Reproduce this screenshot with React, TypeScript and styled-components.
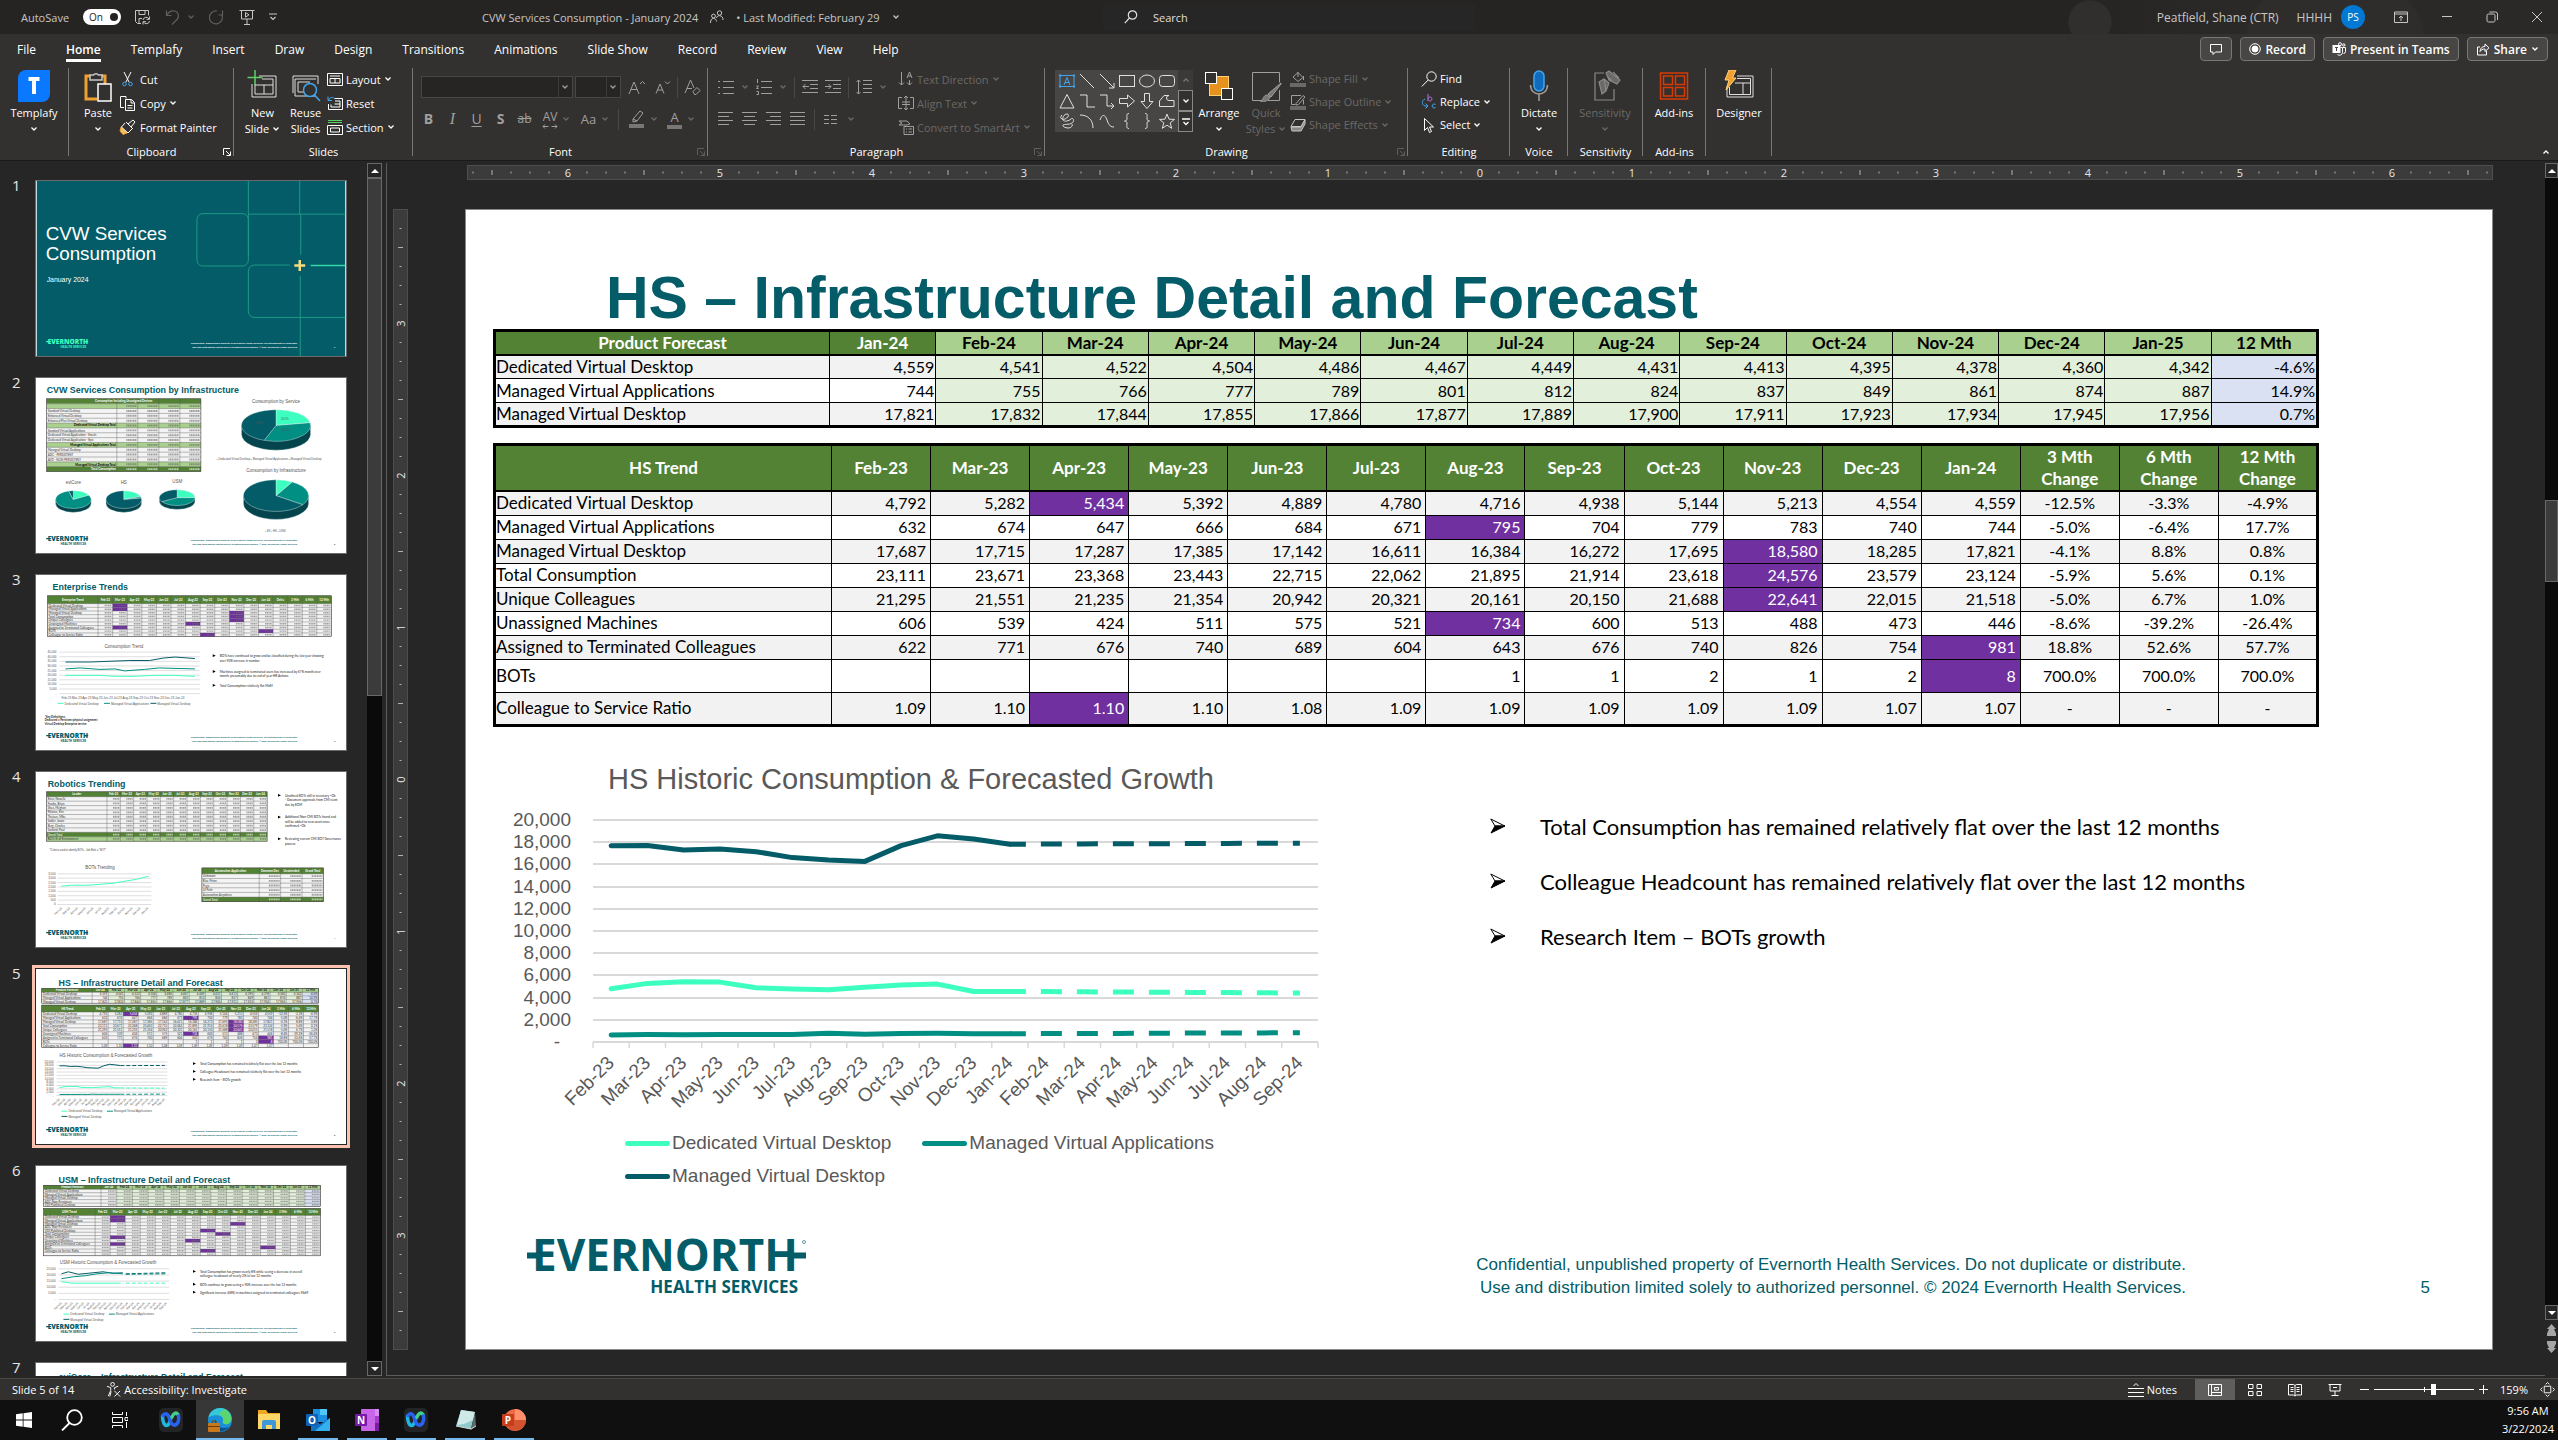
import React from "react";
import styled, { createGlobalStyle, css } from "styled-components";

const UI = `"Open Sans", "Noto Sans", sans-serif`;
const ARIAL = `"Liberation Sans", Arial, sans-serif`;
const SHEET = `Lato, "Open Sans", sans-serif`;

const TEAL = "#035c67";
const SEA = "#008f82";
const MINT = "#3dffc0";

const Global = createGlobalStyle`
  *, *::before, *::after { box-sizing: border-box; }
  body { margin: 0; background: #262626; font-family: ${UI}; overflow: hidden; }
  button, input, select { font: inherit; color: inherit; }
  button { background: none; border: 0; padding: 0; margin: 0; }
  ul, ol { list-style: none; margin: 0; padding: 0; }
  h1, h2, p, figure { margin: 0; }
  svg { display: block; flex: none; }
`;

const Page = styled.div`
  height: 100vh;
  display: flex;
  flex-direction: column;
  color: #fff;
  font-size: 11px;
`;

/* ------------------------------------------------------------ icons */

type SvgProps = { s?: number; w?: number; h?: number; vb?: string; children: React.ReactNode; c?: string; sw?: number };
const Ico = ({ s = 16, w, h, vb = "0 0 16 16", children, c = "currentColor", sw = 1 }: SvgProps) => (
  <svg width={w ?? s} height={h ?? s} viewBox={vb} fill="none" stroke={c} strokeWidth={sw} aria-hidden="true">
    {children}
  </svg>
);

const Chev = ({ up }: { up?: boolean }) => (
  <Ico w={8} h={6} vb="0 0 8 6" sw={1.3}>
    <path d={up ? "M1.5 4.5L4 2L6.5 4.5" : "M1.5 1.5L4 4L6.5 1.5"} />
  </Ico>
);

const Launcher = () => (
  <Ico s={8} vb="0 0 8 8">
    <path d="M.5 7V.5H7M3 3l4 4M7.5 3.5v4h-4" />
  </Ico>
);

/* ------------------------------------------------------------ title bar */

const TitleBar = styled.header`
  height: 34px;
  flex: none;
  display: grid;
  grid-template-columns: 482fr 621fr 372fr 1083fr;
  align-items: center;
  background: #252423;
  color: #c8c6c4;
`;
const QuickAccess = styled.div`
  display: flex;
  align-items: center;
  gap: 14px;
  padding-left: 21px;
`;
const AutoSave = styled.label`
  display: flex;
  align-items: center;
  gap: 7px;
`;
const Hidden = styled.input`
  appearance: none;
  width: 0;
  height: 0;
  margin: 0;
`;
const Pill = styled.span`
  display: flex;
  align-items: center;
  justify-content: space-between;
  width: 38px;
  height: 16px;
  padding: 0 3px 0 6px;
  border-radius: 8px;
  background: #fff;
  color: #252423;
  font-size: 10px;
  &::after {
    content: "";
    width: 8px;
    height: 8px;
    border-radius: 50%;
    background: #252423;
  }
`;
const IconButton = styled.button<{ $dim?: boolean }>`
  display: flex;
  align-items: center;
  gap: 6px;
  color: ${(p) => (p.$dim ? "#605e5c" : "inherit")};
`;
const DocTitle = styled.div`
  display: flex;
  align-items: center;
  gap: 12px;
  white-space: nowrap;
`;
const SearchBox = styled.label`
  display: flex;
  align-items: center;
  gap: 15px;
  height: 25px;
  padding-left: 21px;
  background: #262626;
  color: #e1dfdd;
`;
const SearchInput = styled.input`
  flex: 1;
  min-width: 0;
  border: 0;
  background: none;
  padding: 0;
  outline: none;
  &::placeholder { color: #e1dfdd; opacity: 1; }
`;
const WindowSide = styled.div`
  height: 34px;
  display: flex;
  align-items: center;
  justify-content: flex-end;
  padding-right: 15px;
  background:
    radial-gradient(circle 22px at 615px 22px, #302f2e 96%, transparent),
    radial-gradient(ellipse 90px 60px at 860px 34px, #2e2d2c 96%, transparent),
    linear-gradient(90deg, transparent 55%, #2a2928 70%, #2a2928);
`;
const Account = styled.div`
  display: flex;
  align-items: center;
  gap: 9px;
  margin-right: 29px;
  font-size: 12px;
`;
const AccountName = styled.span`
  margin-right: 9px;
`;
const Avatar = styled.span`
  display: grid;
  place-items: center;
  width: 24px;
  height: 24px;
  border-radius: 50%;
  background: #0078d4;
  color: #fff;
  font-size: 10px;
`;
const WindowButtons = styled.div`
  display: flex;
  align-items: center;
  gap: 33px;
`;

const Title = () => (
  <TitleBar>
    <QuickAccess>
      <AutoSave>
        AutoSave
        <Hidden type="checkbox" defaultChecked />
        <Pill>On</Pill>
      </AutoSave>
      <IconButton aria-label="Save">
        <Ico>
          <path d="M6 14.500H2.500L.5 12.500V1.500h13v5M4 1.500v4h6v-4M4 14V9.500h3M8 11a3.200 3.200 0 0 1 6-1M14.500 7.500V10.300h-3M14.500 12a3.200 3.200 0 0 1-6 1M8 15.500v-2.800h3" />
        </Ico>
      </IconButton>
      <IconButton aria-label="Undo" $dim>
        <Ico sw={1.2}>
          <path d="M1.500 1.500v5h5M2 6C4 2.500 7 1.500 9.500 2c4 .8 5.500 6 2 9L7 15.500" />
        </Ico>
        <Chev />
      </IconButton>
      <IconButton aria-label="Redo" $dim>
        <Ico sw={1.2}>
          <path d="M13.500 1.500v4.500h-4M13 6.200A6.500 6.500 0 1 1 8 2" />
        </Ico>
      </IconButton>
      <IconButton aria-label="Start from beginning">
        <Ico>
          <path d="M.5 1.500h15M2.500 1.500v8.500h11V1.500M8 10v5M5 15.500h6M6.500 3.500l3.500 2.300-3.500 2.300z" />
        </Ico>
      </IconButton>
      <IconButton aria-label="Customize quick access">
        <Ico w={8} h={8} vb="0 0 8 8" sw={1.2}>
          <path d="M0 1h8M1.500 4L4 6.500 6.500 4" />
        </Ico>
      </IconButton>
    </QuickAccess>
    <DocTitle>
      CVW Services Consumption - January 2024
      <Ico s={14} vb="0 0 14 14">
        <circle cx="9.500" cy="3" r="2.200" />
        <circle cx="3.500" cy="6" r="1.900" />
        <path d="M.5 13c0-3 1-4.500 3-4.500s3 1.500 3 3M6.500 8c.3-1.500 1.300-2.300 3-2.300 2.500 0 3.500 2 3.500 4.300" />
      </Ico>
      <span>• Last Modified: February 29</span>
      <Chev />
    </DocTitle>
    <SearchBox>
      <Ico s={14} vb="0 0 14 14" sw={1.2}>
        <circle cx="8.500" cy="5" r="4.200" />
        <path d="M5.400 8L.8 13.200" />
      </Ico>
      <SearchInput type="search" placeholder="Search" aria-label="Search" />
    </SearchBox>
    <WindowSide>
      <Account>
        <AccountName>Peatfield, Shane (CTR)</AccountName>
        <span>HHHH</span>
        <Avatar>PS</Avatar>
      </Account>
      <WindowButtons>
        <IconButton aria-label="Ribbon display options">
          <Ico s={14} vb="0 0 14 14">
            <path d="M.5 2h13v10.500H.5zM.5 4h13M7 11V6M5 8l2-2 2 2" />
          </Ico>
        </IconButton>
        <IconButton aria-label="Minimize">
          <Ico s={12} vb="0 0 12 12">
            <path d="M1 5.500h10" />
          </Ico>
        </IconButton>
        <IconButton aria-label="Restore">
          <Ico s={12} vb="0 0 12 12">
            <rect x="1" y="3" width="8" height="8" rx="1.500" />
            <path d="M3.500 1h6a2 2 0 0 1 2 2v6" />
          </Ico>
        </IconButton>
        <IconButton aria-label="Close">
          <Ico s={12} vb="0 0 12 12">
            <path d="M1 1l10 10M11 1L1 11" />
          </Ico>
        </IconButton>
      </WindowButtons>
    </WindowSide>
  </TitleBar>
);

/* ------------------------------------------------------------ tabs */

const TabRow = styled.div`
  height: 32px;
  flex: none;
  display: flex;
  align-items: center;
  justify-content: space-between;
  padding: 0 10px 2px 17px;
  background: #323130;
  font-size: 12px;
`;
const Tabs = styled.nav`
  display: flex;
  gap: 30px;
`;
const Tab = styled.button<{ $on?: boolean }>`
  height: 26px;
  padding-top: 4px;
  border-bottom: 3px solid ${(p) => (p.$on ? "#fff" : "transparent")};
  font-weight: ${(p) => (p.$on ? 600 : 400)};
`;
const Actions = styled.div`
  display: flex;
  gap: 8px;
`;
const ActionButton = styled.button`
  display: flex;
  align-items: center;
  gap: 4px;
  height: 24px;
  padding: 0 8px;
  border: 1px solid #797775;
  border-radius: 4px;
  background: #484644;
  font-weight: 600;
`;

const TABS = ["File", "Home", "Templafy", "Insert", "Draw", "Design", "Transitions", "Animations", "Slide Show", "Record", "Review", "View", "Help"];

const TabBar = () => (
  <TabRow>
    <Tabs>
      {TABS.map((t) => (
        <Tab key={t} $on={t === "Home"}>{t}</Tab>
      ))}
    </Tabs>
    <Actions>
      <ActionButton aria-label="Comments">
        <Ico s={14} vb="0 0 14 14">
          <path d="M1.500 2.500h11v7.500H6.500L4 12.500V10H1.500z" />
        </Ico>
      </ActionButton>
      <ActionButton>
        <Ico s={12} vb="0 0 12 12">
          <circle cx="6" cy="6" r="5.300" />
          <circle cx="6" cy="6" r="3" fill="#fff" />
        </Ico>
        Record
      </ActionButton>
      <ActionButton>
        <Ico s={14} vb="0 0 14 14">
          <rect x="1" y="3.500" width="7" height="7" fill="#fff" />
          <path d="M3 5.500h3M4.500 5.500v3.500" stroke="#484644" />
          <circle cx="8" cy="2.200" r="1.500" />
          <circle cx="11.800" cy="3" r="1.200" />
          <path d="M8.500 5.500h2v5a3 3 0 0 1-5 2M11 5.500h2.500v4a2 2 0 0 1-2 2" />
        </Ico>
        Present in Teams
      </ActionButton>
      <ActionButton>
        <Ico s={14} vb="0 0 14 14">
          <path d="M4 5H1.500v8h9V9M4 9.500c.3-3.300 2-5 5-5V2l4 3.800L9 9.500V7c-2.500 0-4 .8-5 2.500z" />
        </Ico>
        Share <Chev />
      </ActionButton>
    </Actions>
  </TabRow>
);

/* ------------------------------------------------------------ ribbon */

const RibbonBar = styled.div`
  flex: none;
  display: flex;
  height: 95px;
  padding: 1px 0 0;
  background: #323130;
  border-bottom: 1px solid #1b1a19;
`;
const GroupBox = styled.section<{ $w: number }>`
  width: ${(p) => p.$w}px;
  display: flex;
  flex-direction: column;
  background: linear-gradient(#797775, #797775) right top 1px / 1px 88px no-repeat;
`;
const GroupBody = styled.div<{ $pad: number; $gap?: number }>`
  flex: 1;
  display: flex;
  align-items: flex-start;
  gap: ${(p) => p.$gap ?? 0}px;
  padding: 0 0 0 ${(p) => p.$pad}px;
`;
const GroupName = styled.div`
  height: 16px;
  display: grid;
  grid-template-columns: 1fr auto 1fr;
  align-items: center;
  padding: 0 3px;
  line-height: 16px;
  & > :last-child:not(:first-child) { justify-self: end; }
`;
const Big = styled.button<{ $w: number; $dim?: boolean }>`
  width: ${(p) => p.$w}px;
  display: flex;
  flex-direction: column;
  align-items: center;
  padding-top: 3px;
  line-height: 16px;
  color: ${(p) => (p.$dim ? "#6b6967" : "#fff")};
  & > svg:first-child { margin-bottom: 3px; }
`;
const BigLine = styled.span`
  display: flex;
  align-items: center;
  justify-content: center;
  gap: 3px;
  height: 16px;
`;
const SmallList = styled.div<{ $dim?: boolean; $h?: number }>`
  display: grid;
  grid-auto-rows: ${(p) => p.$h ?? 24}px;
  color: ${(p) => (p.$dim ? "#6b6967" : "#fff")};
`;
const Small = styled.button`
  display: flex;
  align-items: center;
  gap: 3px;
  white-space: nowrap;
`;

const Group = ({ w, name, pad, gap, launcher, dimLauncher, children }: { w: number; name: string; pad: number; gap?: number; launcher?: boolean; dimLauncher?: boolean; children: React.ReactNode }) => (
  <GroupBox $w={w}>
    <GroupBody $pad={pad} $gap={gap}>{children}</GroupBody>
    <GroupName>
      <span />
      <span>{name}</span>
      {launcher ? (
        <IconButton aria-label={`${name} options`} $dim={dimLauncher}><Launcher /></IconButton>
      ) : <span />}
    </GroupName>
  </GroupBox>
);

const FontRows = styled.div`
  display: grid;
  grid-template-rows: 22px 24px;
  gap: 9px;
  padding-top: 9px;
  color: #a19f9d;
`;
const ToolRow = styled.div<{ $gap?: number }>`
  display: flex;
  align-items: center;
  gap: ${(p) => p.$gap ?? 9}px;
`;
const Divider = styled.span`
  width: 1px;
  height: 21px;
  background: #4a4847;
`;
const ComboWrap = styled.span<{ $w: number }>`
  width: ${(p) => p.$w}px;
  height: 22px;
  display: grid;
  grid-template-columns: 1fr 14px;
  border: 1px solid #484644;
  background: #262524;
  & > svg {
    place-self: center;
    grid-area: 1 / 2;
    pointer-events: none;
  }
`;
const Combo = styled.select`
  grid-area: 1 / 1 / 2 / 3;
  appearance: none;
  width: 100%;
  border: 0;
  background: linear-gradient(#484644, #484644) right 13px top 0 / 1px 100% no-repeat;
`;
const Glyph = styled.button<{ $s?: number; $b?: boolean; $i?: boolean; $u?: boolean; $strike?: boolean; $w?: number; $bar?: string }>`
  width: ${(p) => p.$w ?? 15}px;
  display: flex;
  justify-content: center;
  line-height: 18px;
  font-size: ${(p) => p.$s ?? 14}px;
  font-weight: ${(p) => (p.$b ? 700 : 400)};
  ${(p) => p.$i && css`font-style: italic; font-family: "Liberation Serif", serif;`}
  ${(p) => p.$u && css`text-decoration: underline; text-underline-offset: 2px;`}
  ${(p) => p.$strike && css`text-decoration: line-through;`}
  ${(p) => p.$bar && css`border-bottom: 4px solid ${p.$bar}; line-height: 16px;`}
`;
const Spacing = styled.span`
  display: grid;
  justify-items: center;
  line-height: 14px;
`;
const ChevBox = styled.span`
  color: #6b6967;
`;
const LineIcon = ({ lines, extra }: { lines: number[][]; extra?: React.ReactNode }) => (
  <Ico>
    <path d={lines.map(([y, a, b]) => `M${a} ${y}.5H${b}`).join("")} />
    {extra}
  </Ico>
);

const Gallery = styled.div`
  display: grid;
  grid-template-columns: 123px 15px;
  margin-top: 3px;
  height: 62px;
  background: #484644;
`;
const ShapeGrid = styled.div`
  display: grid;
  grid-template-columns: repeat(6, 20px);
  grid-auto-rows: 20px;
  padding: 1px 2px;
  color: #e1dfdd;
`;
const ShapeCell = styled.button`
  display: grid;
  place-items: center;
`;
const GalleryNav = styled.div`
  display: grid;
  grid-template-rows: 20px 21px 21px;
`;
const GalleryStep = styled.button<{ $off?: boolean }>`
  display: grid;
  place-items: center;
  border: 1px solid ${(p) => (p.$off ? "#3b3a39" : "#8a8886")};
  background: ${(p) => (p.$off ? "#3b3a39" : "#323130")};
  color: ${(p) => (p.$off ? "#797775" : "#fff")};
`;

const SHAPES: [string, React.ReactNode][] = [
  ["Text box", <g stroke="#41a5ee"><rect x="1" y="2.500" width="14" height="11" /><path d="M5 12L8 4.500 11 12M6 9.500h4" /><path d="M0 2.500h2M14 2.500h2M0 13.500h2M14 13.500h2" strokeWidth="2" /></g>],
  ["Line", <path d="M1 1l14 14" />],
  ["Arrow", <path d="M1 1l14 14M15 10v5h-5" />],
  ["Rectangle", <rect x=".5" y="2.500" width="15" height="11" />],
  ["Oval", <ellipse cx="8" cy="8" rx="7.500" ry="6" />],
  ["Rounded rectangle", <rect x=".5" y="2.500" width="15" height="11" rx="3" />],
  ["Triangle", <path d="M8 1.500L15 15H1z" />],
  ["Elbow", <path d="M1 2h7v12h8" />],
  ["Elbow arrow", <path d="M1 2h7v11h7M12 10l3 3-3 3" />],
  ["Right arrow", <path d="M.5 5.500h8V2l7 6-7 6v-3.500h-8z" />],
  ["Down arrow", <path d="M5.500 .5v8H2l6 7 6-7h-3.500v-8z" />],
  ["Freeform", <path d="M5 2.500h5a2.500 2.500 0 0 0 0 5h5v6H.5V8z" />],
  ["Scribble", <path d="M3 2c-3 3 0 5 3 4s5-5 2-5-5 4-4 6 6 1 8-1 4 2 1 4-8 1-9 2 2 3 5 3 5-2 4-4" />],
  ["Arc", <path d="M1 2c8 0 13 5 13 13" />],
  ["Curve", <path d="M1 7c2-6 5-6 7 0s4 7 7 7" />],
  ["Left brace", <path d="M10 .5C7 .5 8 3 8 5s-.5 3-2.500 3C7.500 8 8 9 8 11s-1 4.500 2 4.500" />],
  ["Right brace", <path d="M6 .5c3 0 2 2.500 2 4.500s.5 3 2.500 3C8.500 8 8 9 8 11s1 4.500-2 4.500" />],
  ["Star", <path d="M8 1l2 5.200 5.500.2-4.300 3.500 1.500 5.400L8 12.200l-4.700 3.100 1.500-5.400L.5 6.400l5.500-.2z" />],
];

const Ribbon = () => (
  <RibbonBar>
    <Group w={69} name="" pad={8}>
      <Big $w={52}>
        <svg width="32" height="32" viewBox="0 0 32 32" aria-hidden="true">
          <path d="M8 0h24v24a8 8 0 0 1-8 8H0V8a8 8 0 0 1 8-8z" fill="#0a78ff" />
          <path d="M10.500 9h11M16 9v15" stroke="#fff" strokeWidth="4" />
        </svg>
        <BigLine>Templafy</BigLine>
        <BigLine><Chev /></BigLine>
      </Big>
    </Group>

    <Group w={165} name="Clipboard" pad={9} launcher>
      <Big $w={40}>
        <Ico s={32} vb="0 0 32 32" sw={1.500}>
          <path d="M8 6H4v23h11M18 6h5v8" stroke="#f0a030" strokeWidth="3" />
          <path d="M8 10V5h3.500a3 3 0 0 1 5 0H20v5z" fill="#323130" stroke="#c8c6c4" />
          <rect x="16" y="14" width="13" height="17" fill="#323130" />
        </Ico>
        <BigLine>Paste</BigLine>
        <BigLine><Chev /></BigLine>
      </Big>
      <SmallList>
        <Small>
          <Ico w={19}>
            <path d="M4.500 1l5 10M11.500 1l-5 10" />
            <g stroke="#41a5ee"><circle cx="5" cy="13" r="1.800" /><circle cx="11" cy="13" r="1.800" /></g>
          </Ico>
          Cut
        </Small>
        <Small>
          <Ico w={19} vb="0 0 19 16">
            <path d="M8 3.500V1.500H2.500v11H6M7.500 4.500h6l3 3v8h-9zM13 5v3h3M9.500 10.500h5M9.500 13h5" />
          </Ico>
          Copy <Chev />
        </Small>
        <Small>
          <Ico w={19} vb="0 0 19 16">
            <path d="M3 8l6 6-4 1.500L2 12z" fill="#f0c060" stroke="#f0a030" />
            <path d="M8 3l7 7M10 5l5-4 2 2-4 5M7 4L3.500 8 10 14l4-4" />
          </Ico>
          Format Painter
        </Small>
      </SmallList>
    </Group>

    <Group w={179} name="Slides" pad={7}>
      <Big $w={43}>
        <Ico s={32} vb="0 0 32 32">
          <path d="M12 6h17v21H5V14M15 9h11v15H8V14M8 15h18M17 15v9" stroke="#e1dfdd" />
          <path d="M8 0v15M.5 7.500h15" stroke="#5fd068" strokeWidth="1.500" />
        </Ico>
        <BigLine>New</BigLine>
        <BigLine>Slide <Chev /></BigLine>
      </Big>
      <Big $w={43}>
        <Ico s={32} vb="0 0 32 32">
          <path d="M3 23V6h25v8M26 26H5V9h21M8 22V12h12M8 22h6" stroke="#e1dfdd" />
          <circle cx="20" cy="20" r="6.500" stroke="#41a5ee" strokeWidth="1.500" fill="#323130" />
          <path d="M24.500 25l5.500 6" stroke="#41a5ee" strokeWidth="1.500" />
        </Ico>
        <BigLine>Reuse</BigLine>
        <BigLine>Slides</BigLine>
      </Big>
      <SmallList>
        <Small>
          <Ico><path d="M.5 2.500h15v12H.5zM3 5h10M3 7.500h10v4.500H3zM8 7.500V12" /></Ico>
          Layout <Chev />
        </Small>
        <Small>
          <Ico>
            <path d="M7 3.500h8.500v11H1.500V9M8 6h5v6H4V9.500M7.500 9H13" />
            <path d="M1 1.500v4h4M1.500 5C3 2 6 1.500 8 4" stroke="#41a5ee" />
          </Ico>
          Reset
        </Small>
        <Small>
          <Ico>
            <path d="M1 1.500h14M1 3.500h14" stroke="#5fd068" />
            <path d="M.5 6.500h15v9H.5zM3.500 9h9v4h-9z" />
          </Ico>
          Section <Chev />
        </Small>
      </SmallList>
    </Group>

    <Group w={295} name="Font" pad={8} launcher dimLauncher>
      <FontRows>
        <ToolRow $gap={2}>
          <ComboWrap $w={152}><Combo aria-label="Font" disabled /><Chev /></ComboWrap>
          <ComboWrap $w={46}><Combo aria-label="Font size" disabled /><Chev /></ComboWrap>
          <Glyph $w={26} aria-label="Increase font size">
            <Ico w={18}><path d="M1 15L6 3l5 12M3 10.500h6M12 5l2.500-2.500L17 5" /></Ico>
          </Glyph>
          <Glyph $w={24} aria-label="Decrease font size">
            <Ico><path d="M1 14.500L5 5l4 9.500M2.500 11h5M10 2.500L12.500 5 15 2.500" /></Ico>
          </Glyph>
          <Divider />
          <Glyph $w={26} aria-label="Clear formatting">
            <Ico w={18}>
              <path d="M0 14L5.500 1l3.500 8M2 9.500h5" />
              <path d="M8 12.500l4-4 3 3-4 4H9.500z" />
            </Ico>
          </Glyph>
        </ToolRow>
        <ToolRow $gap={9}>
          <Glyph $b>B</Glyph>
          <Glyph $i $s={16}>I</Glyph>
          <Glyph $u>U</Glyph>
          <Glyph $b>S</Glyph>
          <Glyph $strike $s={12}>ab</Glyph>
          <ToolRow $gap={3}>
            <Glyph $s={12} $w={18} aria-label="Character spacing">
              <Spacing>
                AV
                <Ico w={16} h={5} vb="0 0 16 5"><path d="M1 2.500h5.500M9.500 2.500H15M3 .5l-2 2 2 2M13 .5l2 2-2 2" /></Ico>
              </Spacing>
            </Glyph>
            <ChevBox><Chev /></ChevBox>
          </ToolRow>
          <ToolRow $gap={3}><Glyph $s={13} $w={19}>Aa</Glyph><ChevBox><Chev /></ChevBox></ToolRow>
          <Divider />
          <ToolRow $gap={5}>
            <Ico w={17} h={20} vb="0 0 17 20">
              <path d="M5 10l7-8 3 2-6 8-4 1z M5 10l4 2" />
              <path d="M1 17h15" stroke="#797775" strokeWidth="4" />
            </Ico>
            <ChevBox><Chev /></ChevBox>
          </ToolRow>
          <ToolRow $gap={5}><Glyph $s={13} $bar="#797775">A</Glyph><ChevBox><Chev /></ChevBox></ToolRow>
        </ToolRow>
      </FontRows>
    </Group>

    <Group w={337} name="Paragraph" pad={10} gap={11} launcher dimLauncher>
      <FontRows>
        <ToolRow $gap={7}>
          <LineIcon lines={[[2, 5, 16], [8, 5, 16], [14, 5, 16], [2, 0, 2], [8, 0, 2], [14, 0, 2]]} />
          <ChevBox><Chev /></ChevBox>
          <LineIcon lines={[[2, 5, 16], [8, 5, 16], [14, 5, 16]]} extra={<path d="M1.500 0v4M.5 7h2L.5 9.500h2M.5 12.500h2v3h-2" />} />
          <ChevBox><Chev /></ChevBox>
          <Divider />
          <LineIcon lines={[[1, 0, 16], [5, 8, 16], [9, 8, 16], [13, 0, 16]]} extra={<path d="M7 7.500H1M3.500 5L1 7.500 3.500 10" />} />
          <LineIcon lines={[[1, 0, 16], [5, 8, 16], [9, 8, 16], [13, 0, 16]]} extra={<path d="M0 7.500h6M3.500 5L6 7.500 3.500 10" />} />
          <Divider />
          <LineIcon lines={[[1, 7, 16], [5, 7, 16], [9, 7, 16], [13, 7, 16]]} extra={<path d="M2.500 1v14M.5 3l2-2 2 2M.5 13l2 2 2-2" />} />
          <ChevBox><Chev /></ChevBox>
        </ToolRow>
        <ToolRow $gap={8}>
          <LineIcon lines={[[1, 0, 15], [5, 0, 11], [9, 0, 15], [13, 0, 11]]} />
          <LineIcon lines={[[1, 0, 15], [5, 2, 13], [9, 0, 15], [13, 2, 13]]} />
          <LineIcon lines={[[1, 0, 15], [5, 4, 15], [9, 0, 15], [13, 4, 15]]} />
          <LineIcon lines={[[1, 0, 15], [5, 0, 15], [9, 0, 15], [13, 0, 15]]} />
          <Divider />
          <LineIcon lines={[[4, 1, 6], [8, 1, 6], [12, 1, 6], [4, 8, 14], [8, 8, 14], [12, 8, 14]]} />
          <ChevBox><Chev /></ChevBox>
        </ToolRow>
      </FontRows>
      <SmallList $dim>
        <Small>
          <Ico c="#a19f9d"><path d="M3.500 1v13M1 11.500L3.500 14 6 11.500M11.500 9v5M9 11.500l2.500 2.500 2.500-2.500M9 7l2.500-6L14 7M10 5h3" /></Ico>
          Text Direction <Chev />
        </Small>
        <Small>
          <Ico c="#a19f9d"><path d="M4 2.500H.5v11H4M12 2.500h3.500v11H12M8 1v14M6 3l2-2 2 2M6 13l2 2 2-2M4 7h8M4 9.500h8" /></Ico>
          Align Text <Chev />
        </Small>
        <Small>
          <Ico c="#a19f9d"><path d="M1 2h8l3 3-3 1H1l3-2zM6 7.500h9.500v8H6zM8 10h1M10.500 10H14M8 13h1M10.500 13H14" /></Ico>
          Convert to SmartArt <Chev />
        </Small>
      </SmallList>
    </Group>

    <Group w={363} name="Drawing" pad={10} gap={3} launcher dimLauncher>
      <Gallery>
        <ShapeGrid>
          {SHAPES.map(([n, d]) => (
            <ShapeCell key={n} aria-label={n}><Ico>{d}</Ico></ShapeCell>
          ))}
        </ShapeGrid>
        <GalleryNav>
          <GalleryStep $off aria-label="Previous shapes"><Chev up /></GalleryStep>
          <GalleryStep aria-label="Next shapes"><Chev /></GalleryStep>
          <GalleryStep aria-label="More shapes">
            <Ico w={8} h={8} vb="0 0 8 8" sw={1.300}><path d="M0 1h8M1.500 4L4 6.500 6.500 4" /></Ico>
          </GalleryStep>
        </GalleryNav>
      </Gallery>
      <Big $w={46}>
        <Ico s={32} vb="0 0 32 32">
          <rect x="6.500" y="6.500" width="19" height="19" fill="#e8921e" stroke="#ffd27a" />
          <rect x="2.500" y="2.500" width="11" height="11" fill="#323130" />
          <rect x="18.500" y="18.500" width="11" height="11" fill="#323130" />
        </Ico>
        <BigLine>Arrange</BigLine>
        <BigLine><Chev /></BigLine>
      </Big>
      <Big $w={42} $dim>
        <Ico s={32} vb="0 0 32 32" c="#a19f9d">
          <path d="M12 30.500H2.500v-28h27v10M29.500 20v10.500H18" />
          <path d="M31 13L18 24l3 3 10-13zM17 25c-4 0-3 5-7 6 5 1 9 0 10-4z" fill="#797775" />
        </Ico>
        <BigLine>Quick</BigLine>
        <BigLine>Styles <Chev /></BigLine>
      </Big>
      <SmallList $dim $h={23}>
        <Small>
          <Ico c="#a19f9d"><path d="M3 6l5-4.500 5 5-5 4zM8 1v5M13.500 5v4" /><path d="M0 14h16" stroke="#6b6967" strokeWidth="4" /></Ico>
          Shape Fill <Chev />
        </Small>
        <Small>
          <Ico c="#a19f9d"><path d="M11 1.500H1.500v9h4M6 9.500l7-8 2 1.500-6.500 7.500L6 11zM13.500 6v4.500" /><path d="M0 14h16" stroke="#6b6967" strokeWidth="4" /></Ico>
          Shape Outline <Chev />
        </Small>
        <Small>
          <Ico c="#c8c6c4"><path d="M5 2.500h10l-4 7H1z" /><path d="M15 3v4l-4 7H2l-1-4h10z" fill="#8a8886" /></Ico>
          Shape Effects <Chev />
        </Small>
      </SmallList>
    </Group>

    <Group w={102} name="Editing" pad={13}>
      <SmallList $h={23}>
        <Small>
          <Ico><circle cx="10.500" cy="5.500" r="4.700" /><path d="M7.200 9L.8 15.500" /></Ico>
          Find
        </Small>
        <Small>
          <Ico>
            <path d="M7 0v7M7 4.500a2 2 0 1 1 0 1" stroke="#b76fe0" />
            <path d="M4 5C.5 6 .5 11 4 12h2M4.500 9.500L7 12l-2.500 2.500M14.500 10.500a2 2 0 1 0 0 3" stroke="#41a5ee" />
          </Ico>
          Replace <Chev />
        </Small>
        <Small>
          <Ico><path d="M3.500 1.500v12l3-3 2 5 2-1-2-4.500h4z" /></Ico>
          Select <Chev />
        </Small>
      </SmallList>
    </Group>

    <Group w={58} name="Voice" pad={4}>
      <Big $w={50}>
        <Ico s={32} vb="0 0 32 32" sw={1.500}>
          <rect x="11" y="1" width="10" height="20" rx="5" fill="#0f6cbd" stroke="#41a5ee" />
          <path d="M7.500 15c0 12 17 12 17 0M16 24.500V31" stroke="#a19f9d" />
        </Ico>
        <BigLine>Dictate</BigLine>
        <BigLine><Chev /></BigLine>
      </Big>
    </Group>
    <Group w={75} name="Sensitivity" pad={6}>
      <Big $w={62} $dim>
        <Ico s={32} vb="0 0 32 32" c="#8a8886" sw={1.200}>
          <path d="M15 3H6v27h19V19" />
          <path d="M10 12l5-3 2 12-4 3zM18 6l5 5M17 3l3-2 11 9-3 4-8-4zM24 2l6 6M15 9l5 4-3 8" fill="#6b6967" />
        </Ico>
        <BigLine>Sensitivity</BigLine>
        <BigLine><Chev /></BigLine>
      </Big>
    </Group>
    <Group w={63} name="Add-ins" pad={4}>
      <Big $w={54}>
        <Ico s={32} vb="0 0 32 32" c="#d83b01" sw={1.500}>
          <path d="M2.500 3h27v26h-27zM5.500 6h9v8.500h-9zM17.500 6h9v8.500h-9zM5.500 17.500h9V26h-9zM17.500 17.500h9V26h-9z" />
        </Ico>
        <BigLine>Add-ins</BigLine>
      </Big>
    </Group>
    <Group w={66} name="" pad={4}>
      <Big $w={58}>
        <Ico s={32} vb="0 0 32 32">
          <path d="M14 6h16v21H4V16M14 8.500h13.500V24.500H6.500V17M12 13h15.500M20 13v11" stroke="#e1dfdd" />
          <path d="M6 0h7l-3.500 8H13L3 20l3-10H2z" fill="#f0a030" stroke="#ffd27a" />
        </Ico>
        <BigLine>Designer</BigLine>
      </Big>
    </Group>
    <Collapse aria-label="Collapse the ribbon"><Chev up /></Collapse>
  </RibbonBar>
);
const Collapse = styled.button`
  margin-left: auto;
  align-self: flex-end;
  padding: 0 8px 5px;
`;

/* ------------------------------------------------------------ data */

const FC_HEAD = ["Product Forecast", "Jan-24", "Feb-24", "Mar-24", "Apr-24", "May-24", "Jun-24", "Jul-24", "Aug-24", "Sep-24", "Oct-24", "Nov-24", "Dec-24", "Jan-25", "12 Mth"];
const FORECAST: string[][] = [
  ["Dedicated Virtual Desktop", "4,559", "4,541", "4,522", "4,504", "4,486", "4,467", "4,449", "4,431", "4,413", "4,395", "4,378", "4,360", "4,342", "-4.6%"],
  ["Managed Virtual Applications", "744", "755", "766", "777", "789", "801", "812", "824", "837", "849", "861", "874", "887", "14.9%"],
  ["Managed Virtual Desktop", "17,821", "17,832", "17,844", "17,855", "17,866", "17,877", "17,889", "17,900", "17,911", "17,923", "17,934", "17,945", "17,956", "0.7%"],
];
const TR_HEAD = ["HS Trend", "Feb-23", "Mar-23", "Apr-23", "May-23", "Jun-23", "Jul-23", "Aug-23", "Sep-23", "Oct-23", "Nov-23", "Dec-23", "Jan-24", "3 Mth Change", "6 Mth Change", "12 Mth Change"];
const TREND: { peak: number; row: string[] }[] = [
  { peak: 3, row: ["Dedicated Virtual Desktop", "4,792", "5,282", "5,434", "5,392", "4,889", "4,780", "4,716", "4,938", "5,144", "5,213", "4,554", "4,559", "-12.5%", "-3.3%", "-4.9%"] },
  { peak: 7, row: ["Managed Virtual Applications", "632", "674", "647", "666", "684", "671", "795", "704", "779", "783", "740", "744", "-5.0%", "-6.4%", "17.7%"] },
  { peak: 10, row: ["Managed Virtual Desktop", "17,687", "17,715", "17,287", "17,385", "17,142", "16,611", "16,384", "16,272", "17,695", "18,580", "18,285", "17,821", "-4.1%", "8.8%", "0.8%"] },
  { peak: 10, row: ["Total Consumption", "23,111", "23,671", "23,368", "23,443", "22,715", "22,062", "21,895", "21,914", "23,618", "24,576", "23,579", "23,124", "-5.9%", "5.6%", "0.1%"] },
  { peak: 10, row: ["Unique Colleagues", "21,295", "21,551", "21,235", "21,354", "20,942", "20,321", "20,161", "20,150", "21,688", "22,641", "22,015", "21,518", "-5.0%", "6.7%", "1.0%"] },
  { peak: 7, row: ["Unassigned Machines", "606", "539", "424", "511", "575", "521", "734", "600", "513", "488", "473", "446", "-8.6%", "-39.2%", "-26.4%"] },
  { peak: 12, row: ["Assigned to Terminated Colleagues", "622", "771", "676", "740", "689", "604", "643", "676", "740", "826", "754", "981", "18.8%", "52.6%", "57.7%"] },
  { peak: 12, row: ["BOTs", "", "", "", "", "", "", "1", "1", "2", "1", "2", "8", "700.0%", "700.0%", "700.0%"] },
  { peak: 3, row: ["Colleague to Service Ratio", "1.09", "1.10", "1.10", "1.10", "1.08", "1.09", "1.09", "1.09", "1.09", "1.09", "1.07", "1.07", "-", "-", "-"] },
];
const num = (s: string) => Number(s.replace(",", ""));
const series = (i: number, t: number) => ({
  past: TREND[t].row.slice(1, 13).map(num),
  next: FORECAST[i].slice(2, 10).map(num),
});
const SERIES = [
  { name: "Dedicated Virtual Desktop", color: MINT, ...series(0, 0) },
  { name: "Managed Virtual Applications", color: SEA, ...series(1, 1) },
  { name: "Managed Virtual Desktop", color: TEAL, ...series(2, 2) },
];
const MONTHS = [...TR_HEAD.slice(1, 13), ...FC_HEAD.slice(2, 10)];

/* ------------------------------------------------------------ thumbnails */

const G = "#548235";
const LG = "#a9d08e";
const tiny = { fontFamily: SHEET, fontSize: 3 };

type MiniTableProps = {
  x: number; y: number; w: number; first: number; head: number; row: number;
  cols: number; labels: string[]; title: string; heads?: string[]; data?: string[][];
  purple?: [number, number][]; tones?: Record<number, string>; lightFrom?: number; tint?: boolean;
};
const MiniTable = ({ x, y, w, first, head, row, cols, labels, title, heads, data, purple = [], tones = {}, lightFrom, tint }: MiniTableProps) => {
  const cw = (w - first) / cols;
  const h = head + row * labels.length;
  return (
    <g>
      <rect x={x} y={y} width={w} height={h} fill="#f4f4f4" />
      {tint && <rect x={x + first + cw} y={y + head} width={w - first - cw * 2} height={h - head} fill="#e2efda" />}
      {tint && <rect x={x + w - cw} y={y + head} width={cw} height={h - head} fill="#d9e1f2" />}
      <rect x={x} y={y} width={w} height={head} fill={G} />
      {lightFrom !== undefined && <rect x={x + first + cw * lightFrom} y={y} width={w - first - cw * lightFrom} height={head} fill={LG} />}
      {Object.entries(tones).map(([r, c]) => (
        <rect key={r} x={x} y={y + head + row * Number(r)} width={w} height={row} fill={c} />
      ))}
      {purple.map(([r, c]) => (
        <rect key={`${r}-${c}`} x={x + first + cw * c} y={y + head + row * r} width={cw} height={row} fill="#7030a0" />
      ))}
      <path
        d={
          labels.map((_, i) => `M${x} ${y + head + row * i}h${w}`).join("") +
          Array.from({ length: cols }, (_, i) => `M${x + first + cw * i} ${y}v${h}`).join("")
        }
        stroke="#555" strokeWidth=".4"
      />
      <text x={x + first / 2} y={y + head / 2 + 1.200} textAnchor="middle" fill="#fff" fontWeight="700" {...tiny}>{title}</text>
      {heads?.map((t, i) => (
        <text key={i} x={x + first + cw * (i + 0.5)} y={y + head / 2 + 1.200} textAnchor="middle" fill={lightFrom !== undefined && i >= lightFrom ? "#222" : "#fff"} fontWeight="700" {...tiny}>{t}</text>
      ))}
      {labels.map((t, r) => (
        <text key={r} x={x + 1} y={y + head + row * (r + 0.5) + 1.200} fill={tones[r] === G ? "#fff" : "#333"} {...tiny}>{t}</text>
      ))}
      {data
        ? data.map((d, r) => d.map((t, c) => (
            <text key={`${r}-${c}`} x={x + first + cw * (c + 1) - 1} y={y + head + row * (r + 0.5) + 1.200} textAnchor="end" fill={purple.some(([a, b]) => a === r && b === c) ? "#fff" : "#333"} {...tiny}>{t}</text>
          )))
        : labels.map((_, r) => (
            <path key={r} d={Array.from({ length: cols }, (_, c) => `M${x + first + cw * (c + 0.45)} ${y + head + row * (r + 0.5)}H${x + first + cw * (c + 1) - 1}`).join("")} stroke={tones[r] === G ? "#fff" : "#666"} strokeWidth={row * 0.4} strokeDasharray="1.300 .4" opacity=".6" />
          ))}
      <rect x={x} y={y} width={w} height={h} fill="none" stroke="#333" strokeWidth=".6" />
    </g>
  );
};

const MiniBullets = ({ x, items }: { x: number; items: [number, string[]][] }) => (
  <g fill="#222" fontFamily={SHEET} fontSize="3.200">
    {items.map(([y, lines]) => (
      <g key={y}>
        <path d={`M${x} ${y - 2.800}l3 1.400-3 1.400z`} fill="#000" />
        {lines.map((t, i) => <text key={i} x={x + 7} y={y + i * 4.500}>{t}</text>)}
      </g>
    ))}
  </g>
);

const MiniGrid = ({ x, y, w, h, n }: { x: number; y: number; w: number; h: number; n: number }) => (
  <path d={Array.from({ length: n }, (_, i) => `M${x} ${y + (h * i) / (n - 1)}h${w}`).join("")} stroke="#d0d0d0" strokeWidth=".7" />
);
const MiniAxis = ({ x, y, h, labels }: { x: number; y: number; h: number; labels: string[] }) => (
  <g fill="#555" fontFamily={ARIAL} fontSize="3">
    {labels.map((t, i) => <text key={i} x={x} y={y + 1 + (h * i) / (labels.length - 1)} textAnchor="end">{t}</text>)}
  </g>
);
const MiniMonths = ({ x, y, w, labels }: { x: number; y: number; w: number; labels: string[] }) => (
  <g fill="#444" fontFamily={ARIAL} fontSize="3">
    {labels.map((t, i) => {
      const px = x + (w * (i + 0.6)) / labels.length;
      return <text key={i} x={px} y={y} textAnchor="end" transform={`rotate(-45 ${px} ${y})`}>{t}</text>;
    })}
  </g>
);
const MiniLegend = ({ x, y, stacked }: { x: number; y: number; stacked?: boolean }) => (
  <g fontFamily={ARIAL} fontSize="3" fill="#555">
    {SERIES.map((s, i) => {
      const px = stacked && i === 2 ? x : x + i * (stacked ? 46 : 47);
      const py = stacked && i === 2 ? y + 5.300 : y;
      return (
        <g key={s.name}>
          <path d={`M${px} ${py - 1.200}h6`} stroke={s.color} />
          <text x={px + 7} y={py}>{s.name}</text>
        </g>
      );
    })}
  </g>
);
const MiniTitle = ({ x, y = 17, children }: { x: number; y?: number; children: React.ReactNode }) => (
  <text x={x} y={y} fontFamily={ARIAL} fontSize="9" fontWeight="700" fill={TEAL}>{children}</text>
);
const MiniHeading = ({ x, y, children }: { x: number; y: number; children: React.ReactNode }) => (
  <text x={x} y={y} fontFamily={ARIAL} fontSize="4.500" textAnchor="middle" fill="#555">{children}</text>
);
const MiniFooter = ({ n, color = TEAL, legal = TEAL }: { n: number; color?: string; legal?: string }) => (
  <g fill={color} fontFamily={UI}>
    <text x="11" y="165" fontSize="6.700" fontWeight="800">EVERNORTH</text>
    <path d="M9.500 162.500h3M49 162.500h3" stroke={color} strokeWidth="1.200" />
    <text x="50" y="169" fontSize="3" fontWeight="700" textAnchor="end">HEALTH SERVICES</text>
    <g fill={legal} fontFamily={ARIAL} fontSize="2.400" fontWeight="700" textAnchor="end">
      <text x="264" y="165">Confidential, unpublished property of Evernorth Health Services. Do not duplicate or distribute.</text>
      <text x="264" y="168.500">Use and distribution limited solely to authorized personnel. © 2024 Evernorth Health Services.</text>
      <text x="302" y="168.500">{n}</text>
    </g>
  </g>
);

const Pie = ({ cx, cy, rx, ry, d, slices }: { cx: number; cy: number; rx: number; ry: number; d: number; slices: [number, number, string][] }) => {
  const pt = (a: number) => {
    const r = ((a - 90) * Math.PI) / 180;
    return `${(cx + rx * Math.cos(r)).toFixed(2)} ${(cy + ry * Math.sin(r)).toFixed(2)}`;
  };
  return (
    <g stroke="#e8f4f4" strokeWidth=".4" strokeLinejoin="round">
      <path d={`M${cx - rx} ${cy}v${d}a${rx} ${ry} 0 0 0 ${rx * 2} 0v-${d}z`} fill="#04444d" />
      {slices.map(([a, b, c]) => (
        <path key={a} d={`M${cx} ${cy}L${pt(a)}A${rx} ${ry} 0 ${b - a > 180 ? 1 : 0} 1 ${pt(b)}Z`} fill={c} />
      ))}
    </g>
  );
};

const miniLine = (v: number[], x: number, dx: number, y0: number, h: number, max: number, from = 0) =>
  v.map((n, i) => `${i ? "L" : "M"}${(x + dx * (i + from)).toFixed(1)} ${(y0 - (h * n) / max).toFixed(1)}`).join("");

const Thumb1 = () => (
  <>
    <rect width="312" height="177" fill={TEAL} />
    <g fill="none" stroke="#1d9a86" strokeWidth="1">
      <rect x="162" y="33" width="52" height="53" rx="6" />
      <path d="M214 0v75M214 33.500h98M266 0v33.500M267 33.500v41M266.500 96v81M256 85h-36a6 6 0 0 0-6 6v41a6 6 0 0 0 6 6h92" />
      <path d="M277 85.500h35" stroke="#35d6a8" strokeWidth="1.500" />
      <path d="M260.500 85.500h11M266 80v11" stroke="#f7dc7e" strokeWidth="2.500" />
    </g>
    <g fill="#fff" fontFamily={ARIAL}>
      <text x="9" y="60" fontSize="19">CVW Services</text>
      <text x="9" y="80" fontSize="19">Consumption</text>
      <text x="10" y="102" fontSize="7">January 2024</text>
    </g>
    <MiniFooter n={1} color={MINT} legal="#fff" />
  </>
);

const Thumb2 = () => (
  <>
    <MiniTitle x={10} y={15}>CVW Services Consumption by Infrastructure</MiniTitle>
    <MiniTable x={10} y={21} w={156} first={71} head={5} row={4.900} cols={4} title="" labels={["", "Standard Virtual Desktop", "Enhanced Virtual Desktop", "Enhanced Plus Virtual Desktop", "", "Standard Virtual Applications", "Dedicated Virtual Application - Excels", "Dedicated Virtual Application - Epic", "", "Managed Virtual Desktop", "  ADC - PERSISTENT", "  AVD - NON-PERSISTENT", "", ""]} tones={{ 0: LG, 4: LG, 8: LG, 12: LG, 13: G }} />
    <g textAnchor="end" fontWeight="700" {...tiny}>
      <text x="88" y="24.500" fill="#fff" textAnchor="middle">Consumption Including Unassigned Devices</text>
      <text x="80" y="49">Dedicated Virtual Desktop Total</text>
      <text x="80" y="69">Managed Virtual Applications Total</text>
      <text x="80" y="88.500">Managed Virtual Desktop Total</text>
      <text x="80" y="93.500" fill="#fff">Total Consumption</text>
    </g>
    <MiniHeading x={242} y={25}>Consumption by Service</MiniHeading>
    <Pie cx={242} cy={48} rx={35} ry={16} d={9} slices={[[0, 80, MINT], [80, 200, SEA], [200, 360, TEAL]]} />
    <g fontFamily={ARIAL} fontSize="2.800" fill="#555">
      <text x="182" y="83">▪ Dedicated Virtual Desktop ▪ Managed Virtual Applications ▪ Managed Virtual Desktop</text>
      <text x="231" y="156">▪ EV ▪ HS ▪ USM</text>
      <text x="247" y="42">20.5%</text>
      <text x="248" y="54">40.7%</text>
      <text x="222" y="47">38.8%</text>
    </g>
    <MiniHeading x={242} y={95}>Consumption by Infrastructure</MiniHeading>
    <Pie cx={242} cy={119} rx={33} ry={16} d={8} slices={[[0, 30, MINT], [30, 125, SEA], [125, 360, TEAL]]} />
    <MiniHeading x={37} y={107}>eviCore</MiniHeading>
    <Pie cx={37} cy={123} rx={18} ry={9} d={4} slices={[[0, 60, MINT], [60, 345, SEA], [345, 360, TEAL]]} />
    <MiniHeading x={88} y={107}>HS</MiniHeading>
    <Pie cx={88} cy={123} rx={18} ry={9} d={4} slices={[[0, 70, MINT], [70, 80, SEA], [80, 360, TEAL]]} />
    <MiniHeading x={142} y={106}>USM</MiniHeading>
    <Pie cx={142} cy={121} rx={18} ry={8} d={4} slices={[[0, 90, MINT], [90, 240, SEA], [240, 360, TEAL]]} />
    <MiniFooter n={2} />
  </>
);

const Thumb3 = () => (
  <>
    <MiniTitle x={16} y={15}>Enterprise Trends</MiniTitle>
    <MiniTable x={11} y={21} w={287} first={51} head={8} row={3.700} cols={16} title="Enterprise Trend" heads={[...TR_HEAD.slice(1, 13), "Delta", "3 Mth", "6 Mth", "12 Mth"]} labels={["Dedicated Virtual Desktop", "Managed Virtual Applications", "Managed Virtual Desktop", "Total Consumption", "Unique Colleagues", "Unassigned Machines", "Assigned to Terminated Colleagues", "BOTs", "Colleague to Service Ratio"]} purple={[[0, 1], [1, 1], [2, 9], [3, 9], [4, 9], [5, 6], [6, 1], [7, 11], [8, 7]]} />
    <MiniHeading x={88} y={74}>Consumption Trend</MiniHeading>
    <MiniGrid x={23} y={78} w={142} h={42} n={10} />
    <MiniAxis x={20} y={78} h={42} labels={["45,000", "40,000", "35,000", "30,000", "25,000", "20,000", "15,000", "10,000", "5,000", "-"]} />
    <g fill="none" strokeWidth="1">
      <path d="M29 88l25 0 40-1.500 20 0 14-2.500 12-1 20 1.500" stroke={TEAL} />
      <path d="M29 95l15-1 20 1.500 15-.5 10 2 20-1.500 15-1.500 36 1" stroke={SEA} />
      <path d="M29 101.500h35l15 1h20l20-1h20l21 1" stroke={MINT} />
    </g>
    <text x="25" y="125" fontFamily={ARIAL} fontSize="3.100" fill="#555">Feb-23 Mar-23 Apr-23 May-23 Jun-23 Jul-23 Aug-23 Sep-23 Oct-23 Nov-23 Dec-23 Jan-24</text>
    <MiniLegend x={21} y={131} />
    <MiniBullets x={178} items={[[83, ["BOTs have continued to grow and be classified during the last year showing", "over 90% increase in number"]], [99, ["Machines assigned to terminated users has increased by 67% month over", "month, presumably due to end of year HR Actions"]], [113, ["Total Consumption relatively flat MoM"]]]} />
    <g fontFamily={SHEET} fontSize="2.800" fontWeight="700" fill="#222">
      <text x="8" y="144.500">*Key Definitions:</text>
      <text x="8" y="148">Dedicated = Persistent physical assignment</text>
      <text x="8" y="151.500">Virtual Desktop Enterprise service</text>
    </g>
    <MiniFooter n={3} />
  </>
);

const Thumb4 = () => (
  <>
    <MiniTitle x={11} y={15}>Robotics Trending</MiniTitle>
    <MiniTable x={10} y={20} w={223} first={61} head={5} row={4.500} cols={12} title="Leader" heads={TR_HEAD.slice(1, 13)} labels={["Ester, Nouelle", "Franks, Brian", "Shea, Meghan", "Palance, Eric", "Theisen, Mike", "Sadler, Jason", "Berg, Charles", "Sanford, Paul", "Grand Total", "BOTs % of Environment"]} tones={{ 8: G, 9: LG }} />
    <text x="13" y="80" fontFamily={ARIAL} fontSize="2.600" fill="#444">*Criteria used to identify BOTs - Job Role = "BOT"</text>
    <MiniHeading x={64} y={98}>BOTs Trending</MiniHeading>
    <MiniGrid x={21} y={103} w={95} h={31} n={8} />
    <MiniAxis x={19} y={103} h={31} labels={["3,500", "3,000", "2,500", "2,000", "1,500", "1,000", "500", "0"]} />
    <path d="M25 115.500l10-1h18l12-1 12-1 12-2 12-2 12-3" stroke={MINT} fill="none" />
    <MiniMonths x={21} y={138} w={95} labels={MONTHS.slice(0, 12)} />
    <MiniTable x={167} y={97} w={123} first={58} head={6} row={4.700} cols={3} title="Automation Application" heads={["Decomm Dec", "Unattended", "Grand Total"]} labels={["Unknown", "Blue Prism", "Pega", "UI Path", "Automation Anywhere", "Grand Total"]} tones={{ 5: G }} />
    <MiniBullets x={244} items={[[25, ["Unattired BOTs still in inventory ~Ok", "- Document approvals from CMI team", "due by EOM"]], [47, ["Additional Non-CMI BOTs found and", "will be added to new count once", "confirmed ~Ok"]], [69, ["Reviewing current CMI BOT Governance", "process"]]]} />
    <MiniFooter n={4} />
  </>
);

const Thumb5 = () => (
  <>
    <MiniTitle x={22}>HS – Infrastructure Detail and Forecast</MiniTitle>
    <MiniTable x={5} y={19.500} w={280} first={51} head={4} row={3.700} cols={14} title="Product Forecast" heads={FC_HEAD.slice(1)} lightFrom={1} tint labels={FORECAST.map((r) => r[0])} data={FORECAST.map((r) => r.slice(1))} />
    <MiniTable x={5} y={36.500} w={280} first={52} head={7} row={4} cols={15} title="HS Trend" heads={TR_HEAD.slice(1).map((t) => t.replace(" Change", ""))} labels={TREND.map((r) => r.row[0])} data={TREND.map((r) => r.row.slice(1))} purple={TREND.map((r, i) => [i, r.peak - 1])} />
    <MiniHeading x={70} y={89}>HS Historic Consumption &amp; Forecasted Growth</MiniHeading>
    <MiniGrid x={20} y={94} w={112} h={34} n={11} />
    <MiniAxis x={17} y={94} h={34} labels={["20,000", "18,000", "16,000", "14,000", "12,000", "10,000", "8,000", "6,000", "4,000", "2,000", "-"]} />
    {SERIES.map((s) => (
      <g key={s.name} fill="none" stroke={s.color} strokeWidth="1">
        <path d={miniLine(s.past, 23, 5.600, 128, 34, 20000)} />
        <path d={miniLine([s.past[11], ...s.next], 23, 5.600, 128, 34, 20000, 11)} strokeDasharray="4 2" />
      </g>
    ))}
    <MiniMonths x={20} y={132} w={112} labels={MONTHS} />
    <MiniLegend x={25} y={145} stacked />
    <MiniBullets x={158} items={[[97, ["Total Consumption has remained relatively flat over the last 12 months"]], [105, ["Colleague Headcount has remained relatively flat over the last 12 months"]], [113, ["Research Item – BOTs growth"]]]} />
    <MiniFooter n={5} />
  </>
);

const Thumb6 = () => (
  <>
    <MiniTitle x={22}>USM – Infrastructure Detail and Forecast</MiniTitle>
    <MiniTable x={7} y={19.500} w={280} first={58} head={4} row={3.500} cols={14} title="Product Forecast" heads={FC_HEAD.slice(1)} lightFrom={1} tint labels={["Dedicated Virtual Desktop", "Managed Virtual Applications", "Managed Virtual Desktop", " ADC-Non-Persistent", " VDI-Published Desktop"]} />
    <MiniTable x={7} y={43} w={280} first={52} head={7} row={3.400} cols={15} title="USM Trend" heads={TR_HEAD.slice(1).map((t) => t.replace(" Change", ""))} labels={["Dedicated Virtual Desktop", "Managed Virtual Applications", "Managed Virtual Desktop", " ADC-Non-Persistent", " VDI-Published Desktop", "Total Consumption", "Unique Colleagues", "Unassigned Machines", "Assigned to Terminated Colleagues", "BOTs", "Colleague to Service Ratio", ""]} purple={[[0, 1], [1, 1], [2, 9], [4, 7], [5, 8], [6, 1], [7, 6], [8, 1], [9, 11], [10, 7]]} />
    <MiniHeading x={72} y={99}>USM Historic Consumption &amp; Forecasted Growth</MiniHeading>
    <MiniGrid x={22} y={104} w={112} h={31} n={6} />
    <MiniAxis x={19} y={104} h={31} labels={["25,000", "20,000", "15,000", "10,000", "5,000", "-"]} />
    <g fill="none">
      <path d="M25 109l7-2 10 2.500 10-1 15-1.500 10 1.500 10-.5" stroke={TEAL} />
      <path d="M25 114l12-2 12-1 12-2 12-1 14 1" stroke={SEA} />
      <path d="M25 117l10 1.500h50" stroke={MINT} />
      <path d="M90 109l42-1" stroke={TEAL} strokeDasharray="4 2" />
      <path d="M90 109.500l42-.5" stroke={SEA} strokeDasharray="4 2" />
      <path d="M90 118.500h42" stroke={MINT} strokeDasharray="4 2" />
    </g>
    <MiniMonths x={22} y={139} w={112} labels={MONTHS} />
    <MiniLegend x={27} y={151} stacked />
    <MiniBullets x={158} items={[[108, ["Total Consumption has grown nearly 8% while seeing a decrease in overall", "colleague headcount of nearly 2% in last 12 months"]], [121, ["BOTs continue to grow seeing a 90% increase over the last 12 months"]], [129, ["Significant increase (68%) in machines assigned to terminated colleagues MoM"]]]} />
    <MiniFooter n={6} />
  </>
);

const Thumb7 = () => <MiniTitle x={22}>eviCore – Infrastructure Detail and Forecast</MiniTitle>;

const THUMBS = [Thumb1, Thumb2, Thumb3, Thumb4, Thumb5, Thumb6, Thumb7];

const ThumbPane = styled.aside`
  width: 387px;
  flex: none;
  display: flex;
  border-right: 1px solid #5c5c5c;
`;
const ThumbList = styled.ol`
  flex: 1;
  display: flex;
  flex-direction: column;
  gap: 20px;
  padding: 17px 0 0 12px;
  overflow: hidden;
`;
const ThumbItem = styled.li`
  display: grid;
  grid-template-columns: 23px 312px;
  flex: none;
`;
const ThumbNumber = styled.span`
  font-size: 15px;
  line-height: 10px;
  color: #e6e6e6;
`;
const ThumbButton = styled.button<{ $on?: boolean }>`
  height: 177px;
  overflow: hidden;
  background: #fff;
  border: 1px solid ${(p) => (p.$on ? "#262626" : "#6a6a6a")};
  outline: ${(p) => (p.$on ? "3px solid #fbc2b0" : "none")};
`;

/* ------------------------------------------------------------ scroll bars */

const Scroll = styled.div<{ $w: number }>`
  width: ${(p) => p.$w}px;
  flex: none;
  display: flex;
  flex-direction: column;
  background: #0a0a0a;
`;
const ScrollArrow = styled.button`
  height: 15px;
  display: grid;
  place-items: center;
  border: 1px solid #686868;
  background: #262626;
`;
const ScrollThumb = styled.div<{ $grow: number }>`
  flex: ${(p) => p.$grow} 0 0;
  border: 1px solid #686868;
  background: #3b3b3b;
`;
const ScrollGap = styled.div<{ $grow: number }>`
  flex: ${(p) => p.$grow} 0 0;
`;
const Tri = ({ down }: { down?: boolean }) => (
  <Ico w={8} h={4} vb="0 0 8 4">
    <path d={down ? "M0 0h8L4 4z" : "M0 4h8L4 0z"} fill="#fff" stroke="none" />
  </Ico>
);
const SlideJump = styled.div`
  display: grid;
  justify-items: center;
  gap: 5px;
  height: 56px;
  align-content: start;
  padding-top: 4px;
  background: #262626;
  color: #a6a6a6;
`;

/* ------------------------------------------------------------ rulers */

const RULER_STEP = 152;
const HRulerBar = styled.div`
  height: 15px;
  flex: none;
  margin: 0 52px 0 78px;
  border: 1px solid #4d4d4d;
  background: #3b3b3b;
`;
const VRulerBar = styled.div`
  width: 15px;
  flex: none;
  border: 1px solid #4d4d4d;
  background: #3b3b3b;
`;
const Ruler = ({ vertical, reach }: { vertical?: boolean; reach: number }) => {
  const ticks: React.ReactNode[] = [];
  for (let i = -reach * 8 - 5; i <= reach * 8 + 5; i++) {
    const at = (i * RULER_STEP) / 8;
    const inch = Math.abs(i / 8);
    if (i % 8 === 0) {
      ticks.push(
        <text key={i} fill="#e6e6e6" fontFamily={UI} fontSize="11" textAnchor="middle"
          transform={vertical ? `translate(10.500 ${at}) rotate(-90)` : `translate(${at} 10.500)`}>{inch}</text>
      );
    } else {
      const len = i % 4 === 0 ? 5 : 2;
      const a = 6.500 - len / 2;
      ticks.push(<path key={i} d={vertical ? `M${a} ${at}h${len}` : `M${at} ${a}v${len}`} stroke="#b0b0b0" />);
    }
  }
  return (
    <svg width="100%" height="100%" aria-hidden="true">
      <svg x={vertical ? 0 : "50%"} y={vertical ? "50%" : 0} overflow="visible">{ticks}</svg>
    </svg>
  );
};

/* ------------------------------------------------------------ slide */

const EditPane = styled.main`
  flex: 1;
  min-width: 0;
  display: flex;
  flex-direction: column;
  padding: 2px 0 0 2px;
  border-bottom: 1px solid #5c5c5c;
`;
const SlideRow = styled.div`
  display: flex;
  gap: 57px;
  margin: 29px 52px 0 4px;
`;
const SlideSheet = styled.article`
  flex: 1;
  min-width: 0;
  aspect-ratio: 2028 / 1141;
  display: flex;
  flex-direction: column;
  border: 1px solid #8a8a8a;
  background: #fff;
  color: #000;
`;
const SlideTitle = styled.h1`
  padding: 57px 0 0 140px;
  font: 700 59px/62px ${ARIAL};
  color: ${TEAL};
`;
const Sheet = styled.table<{ $first: number }>`
  width: calc(100% - 200px);
  margin: 0 173px 0 27px;
  table-layout: fixed;
  border-collapse: collapse;
  border: 3px solid #000;
  font-family: ${SHEET};
  font-size: 16px;
  line-height: 18px;
  th:first-child { width: ${(p) => p.$first}px; }
  & + & { margin-top: 15px; }
`;
const HeadCell = styled.th<{ $light?: boolean; $h: number; $lh?: number }>`
  height: ${(p) => p.$h}px;
  padding: 0 4px;
  border: 1px solid #000;
  border-bottom-width: 2px;
  background: ${(p) => (p.$light ? LG : G)};
  color: ${(p) => (p.$light ? "#000" : "#fff")};
  font-size: 17px;
  line-height: ${(p) => p.$lh ?? 18}px;
`;
const Label = styled.td`
  padding: 0;
  border: 1px solid #000;
  white-space: nowrap;
  font-size: 17px;
`;
const Cell = styled.td<{ $tone?: string; $center?: boolean; $pad?: number }>`
  padding: 0 ${(p) => p.$pad ?? 1}px 0 0;
  border: 1px solid #000;
  text-align: ${(p) => (p.$center ? "center" : "right")};
  ${(p) => p.$tone && css`background: ${p.$tone};`}
  ${(p) => p.$tone === "#7030a0" && css`color: #fff;`}
`;
const Row = styled.tr<{ $h: number; $shade?: boolean }>`
  height: ${(p) => p.$h}px;
  background: ${(p) => (p.$shade ? "#f2f2f2" : "#fff")};
`;

const Lower = styled.div`
  display: grid;
  grid-template-columns: 997px 1fr;
  padding-left: 27px;
`;
const ChartTitle = styled.h2`
  padding: 32px 0 0 115px;
  font: 400 29px/40px ${ARIAL};
  color: #595959;
`;
const Legend = styled.ul`
  display: grid;
  grid-template-columns: max-content max-content;
  column-gap: 31px;
  grid-auto-rows: 33px;
  align-items: center;
  padding: 3px 0 0 132px;
  font: 19px ${ARIAL};
  color: #595959;
`;
const LegendItem = styled.li<{ $c: string }>`
  display: flex;
  align-items: center;
  gap: 2px;
  &::before {
    content: "";
    width: 45px;
    height: 5px;
    border-radius: 3px;
    background: ${(p) => p.$c};
  }
`;
const Bullets = styled.ul`
  padding-top: 72px;
  font: 22px/55px ${SHEET};
`;
const Bullet = styled.li`
  display: flex;
  align-items: center;
  gap: 34px;
`;
const SlideFooter = styled.footer`
  margin-top: auto;
  display: flex;
  align-items: flex-end;
  padding: 0 62px 50px 60px;
  font: 17px/23px ${ARIAL};
  color: ${TEAL};
`;
const Legal = styled.p`
  margin-left: auto;
  text-align: right;
`;
const PageNumber = styled.span`
  width: 244px;
  text-align: right;
`;

const Chart = () => {
  const x0 = 100, x1 = 825, y0 = 243, y1 = 21;
  const step = (x1 - x0) / 20;
  const X = (i: number) => x0 + step * (i + 0.5);
  const Y = (v: number) => y0 - ((y0 - y1) * v) / 20000;
  const path = (v: number[], from = 0) => v.map((n, i) => `${i ? "L" : "M"}${X(i + from)} ${Y(n).toFixed(1)}`).join("");
  return (
    <svg width="860" height="325" role="img" aria-label="HS historic consumption and forecasted growth">
      <g stroke="#d9d9d9" strokeWidth="2">
        {Array.from({ length: 11 }, (_, i) => <path key={i} d={`M${x0} ${Math.round(Y(i * 2000))}H${x1}`} />)}
        {Array.from({ length: 21 }, (_, i) => <path key={i} d={`M${x0 + step * i} ${y0}v6`} strokeWidth="1.500" />)}
      </g>
      <g fontFamily={ARIAL} fontSize="19" fill="#595959" textAnchor="end">
        {Array.from({ length: 11 }, (_, i) => (
          <text key={i} x={i ? 78 : 67} y={Y(i * 2000) + 6}>{i ? (i * 2000).toLocaleString("en-US") : "-"}</text>
        ))}
        {MONTHS.map((m, i) => (
          <text key={i} transform={`translate(${X(i) + 4} 265) rotate(-45)`}>{m}</text>
        ))}
      </g>
      {SERIES.map((s) => (
        <g key={s.name} fill="none" stroke={s.color} strokeWidth="5" strokeLinejoin="round">
          <path d={path(s.past)} strokeLinecap="round" />
          <path d={path([s.past[11], ...s.next], 11)} strokeDasharray="21 15" strokeDashoffset="5" />
        </g>
      ))}
    </svg>
  );
};

const Logo = () => (
  <svg width="284" height="63" viewBox="0 0 284 63" role="img" aria-label="Evernorth Health Services">
    <g fill={TEAL} fontFamily={UI}>
      <text x="6" y="35" fontSize="44" fontWeight="700">EVERNORTH</text>
      <text x="272" y="57" fontSize="17" fontWeight="700" textAnchor="end">HEALTH SERVICES</text>
      <path d="M1 16.500h14v6H1zM262 16.500h18v6h-18z" />
      <circle cx="278" cy="6" r="1.500" fill="none" stroke={TEAL} strokeWidth=".6" />
    </g>
  </svg>
);

const Slide = () => (
  <SlideSheet>
    <SlideTitle>HS – Infrastructure Detail and Forecast</SlideTitle>
    <Sheet $first={335}>
      <thead>
        <tr>
          {FC_HEAD.map((h, i) => <HeadCell key={h} $h={24} $light={i > 1} scope="col">{h}</HeadCell>)}
        </tr>
      </thead>
      <tbody>
        {FORECAST.map((r, i) => (
          <Row key={r[0]} $h={24} $shade={i % 2 === 0}>
            <Label>{r[0]}</Label>
            {r.slice(1).map((v, c) => (
              <Cell key={c} $tone={c === 0 ? undefined : c === 13 ? "#d9e1f2" : "#e2efda"}>{v}</Cell>
            ))}
          </Row>
        ))}
      </tbody>
    </Sheet>
    <Sheet $first={337}>
      <thead>
        <tr>
          {TR_HEAD.map((h) => <HeadCell key={h} $h={46} $lh={22} scope="col">{h}</HeadCell>)}
        </tr>
      </thead>
      <tbody>
        {TREND.map(({ row, peak }, i) => (
          <Row key={row[0]} $h={i < 7 ? 24 : 33} $shade={i % 2 === 0}>
            <Label>{row[0]}</Label>
            {row.slice(1).map((v, c) => (
              <Cell key={c} $pad={c > 11 ? 0 : 4} $center={c > 11} $tone={c + 1 === peak ? "#7030a0" : undefined}>{v}</Cell>
            ))}
          </Row>
        ))}
      </tbody>
    </Sheet>
    <Lower>
      <figure>
        <ChartTitle>HS Historic Consumption &amp; Forecasted Growth</ChartTitle>
        <Chart />
        <Legend>
          {SERIES.map((s) => <LegendItem key={s.name} $c={s.color}>{s.name}</LegendItem>)}
        </Legend>
      </figure>
      <Bullets>
        {["Total Consumption has remained relatively flat over the last 12 months", "Colleague Headcount has remained relatively flat over the last 12 months", "Research Item – BOTs growth"].map((t) => (
          <Bullet key={t}>
            <Ico><path d="M.8 1l14 7H5z" /><path d="M5 8h10L1 15z" fill="#000" /></Ico>
            {t}
          </Bullet>
        ))}
      </Bullets>
    </Lower>
    <SlideFooter>
      <Logo />
      <Legal>
        Confidential, unpublished property of Evernorth Health Services. Do not duplicate or distribute.
        <br />
        Use and distribution limited solely to authorized personnel. © 2024 Evernorth Health Services.
      </Legal>
      <PageNumber>5</PageNumber>
    </SlideFooter>
  </SlideSheet>
);

/* ------------------------------------------------------------ work area */

const Work = styled.div`
  flex: 1;
  min-height: 0;
  display: flex;
  padding: 2px 0;
  background: #262626;
`;

/* ------------------------------------------------------------ status bar */

const StatusBar = styled.footer`
  height: 22px;
  flex: none;
  display: flex;
  align-items: center;
  padding: 0 3px 0 12px;
  border-top: 1px solid #484644;
  background: #323130;
`;
const StatusButton = styled.button<{ $w?: number; $on?: boolean }>`
  height: 21px;
  display: flex;
  align-items: center;
  justify-content: center;
  gap: 3px;
  ${(p) => p.$w && css`width: ${p.$w}px;`}
  background: ${(p) => (p.$on ? "#605e5c" : "none")};
`;
const Access = styled(StatusButton)`
  margin-left: 32px;
`;
const StatusRight = styled.div`
  display: flex;
  align-items: center;
  margin-left: auto;
`;
const Views = styled.div`
  display: flex;
  margin: 0 5px 0 18px;
`;
const Zoom = styled.input`
  appearance: none;
  width: 100px;
  height: 15px;
  margin: 0 5px;
  background:
    linear-gradient(#fff, #fff) 50px 5px / 1px 5px no-repeat,
    linear-gradient(#fff, #fff) 0 7px / 100% 1px no-repeat;
  &::-webkit-slider-thumb {
    appearance: none;
    width: 5px;
    height: 11px;
    background: #fff;
  }
`;
const ZoomValue = styled.span`
  margin: 0 12px;
`;

const Status = () => (
  <StatusBar>
    <span>Slide 5 of 14</span>
    <Access>
      <Ico s={15}>
        <circle cx="7" cy="2.500" r="2" />
        <path d="M1 4.500l4 1.500v3L2.500 15M13 4.500L9 6v2M5.500 10L4 15.500M9 9.500l6 6M15 9.500l-6 6" />
      </Ico>
      Accessibility: Investigate
    </Access>
    <StatusRight>
      <StatusButton>
        <Ico><path d="M0 6.500h16M0 10.500h16M0 14.500h16M5.500 4L8 1.500 10.500 4" /></Ico>
        Notes
      </StatusButton>
      <Views>
        <StatusButton $w={40} $on aria-label="Normal view">
          <Ico s={14} vb="0 0 14 14"><path d="M.5 1.500h13v11H.5zM3.500 1.500v11M3.500 9.500h10M6.500 4.500h4v2.500h-4z" /></Ico>
        </StatusButton>
        <StatusButton $w={40} aria-label="Slide sorter">
          <Ico s={14} vb="0 0 14 14"><path d="M.5 1.500h4.500v4H.5zM9 1.500h4.500v4H9zM.5 8.500h4.500v4H.5zM9 8.500h4.500v4H9z" /></Ico>
        </StatusButton>
        <StatusButton $w={40} aria-label="Reading view">
          <Ico s={14} vb="0 0 14 14"><path d="M.5 1.500h5L7 2.500l1.500-1h5v10.500H8.500L7 13l-1.500-1h-5zM7 2.500V13M2.500 4.500h3M2.500 6.500h3M2.500 8.500h3M8.500 4.500h3M8.500 6.500h3M8.500 8.500h3" /></Ico>
        </StatusButton>
        <StatusButton $w={40} aria-label="Slide show">
          <Ico s={14} vb="0 0 14 14"><path d="M.5 1.500h13M2 1.500v6.500h10v-6.500M7 8v4.500M3.500 12.500h7M5 4.500h4" /></Ico>
        </StatusButton>
      </Views>
      <StatusButton aria-label="Zoom out"><Ico s={9} vb="0 0 9 9"><path d="M0 4.500h9" /></Ico></StatusButton>
      <Zoom type="range" min={10} max={260} defaultValue={159} aria-label="Zoom" />
      <StatusButton aria-label="Zoom in"><Ico s={9} vb="0 0 9 9"><path d="M0 4.500h9M4.500 0v9" /></Ico></StatusButton>
      <ZoomValue>159%</ZoomValue>
      <StatusButton aria-label="Fit slide to window">
        <Ico s={15}><path d="M4.500 4.500h7v7h-7zM6 2.500L8 .5l2 2M6 13.500l2 2 2-2M2.500 6l-2 2 2 2M13.500 6l2 2-2 2" /></Ico>
      </StatusButton>
    </StatusRight>
  </StatusBar>
);

/* ------------------------------------------------------------ taskbar */

const TaskbarBox = styled.footer`
  height: 40px;
  flex: none;
  display: flex;
  padding-right: 4px;
  background: #101010;
`;
const TaskButton = styled.button<{ $open?: boolean; $active?: boolean }>`
  width: 48px;
  height: 40px;
  display: grid;
  place-items: center;
  background: ${(p) =>
    p.$active
      ? "linear-gradient(#76b9ed, #76b9ed) bottom / 48px 2px no-repeat #373737"
      : p.$open
      ? "linear-gradient(#76b9ed, #76b9ed) bottom / 40px 2px no-repeat"
      : "none"};
`;
const Apps = styled.div`
  display: flex;
  gap: 1px;
  margin-left: 3px;
`;
const Clock = styled.time`
  margin-left: auto;
  align-self: center;
  text-align: center;
  font-size: 11px;
  line-height: 18px;
`;
const Webex = () => (
  <svg width="24" height="24" viewBox="0 0 24 24" aria-hidden="true">
    <rect width="24" height="24" rx="5" fill="#232426" />
    <g fill="none" strokeWidth="3.500" strokeLinecap="round">
      <path d="M3.500 8c0 6 2 9.500 4 9.500 2.500 0 3.500-4 4.500-8" stroke="#1fb6e0" />
      <path d="M4 7.500c3-3.500 5.500-1 6.500 3 1 4 3 8 6 6" stroke="#2a62f0" />
      <path d="M13 9c1.500-4 4-5 6-2.500" stroke="#3fd08a" />
      <path d="M19.500 8c1 4-1 8.500-3.500 9" stroke="#2a62f0" />
    </g>
  </svg>
);
const Tile = ({ letter, color }: { letter: string; color: string }) => (
  <>
    <rect x="0" y="6" width="12" height="12" rx="1" fill={color} />
    <text x="6" y="15.500" fontFamily={UI} fontSize="10" fontWeight="700" fill="#fff" textAnchor="middle">{letter}</text>
  </>
);

const Taskbar = () => (
  <TaskbarBox>
    <TaskButton aria-label="Start">
      <svg width="16" height="16" viewBox="0 0 16 16" fill="#fff" aria-hidden="true">
        <path d="M0 2.200l6.700-.9v6.300H0zM7.500 1.200L16 0v7.600H7.500zM0 8.400h6.700v6.300L0 13.800zM7.500 8.400H16V16l-8.500-1.200z" />
      </svg>
    </TaskButton>
    <TaskButton aria-label="Search">
      <Ico s={22} vb="0 0 22 22" sw={1.800}><circle cx="13.500" cy="8.500" r="7.300" /><path d="M8.500 14L1 21.500" /></Ico>
    </TaskButton>
    <TaskButton aria-label="Task view">
      <Ico><path d="M.5 0v2.500h10V0M.5 5.500h10v5H.5zM.5 16v-2.500h10V16M14.500 0v4M14.500 10v6M13 5.500h3v3h-3z" /></Ico>
    </TaskButton>
    <Apps>
      <TaskButton aria-label="Webex"><Webex /></TaskButton>
      <TaskButton $active aria-label="Edge">
        <svg width="26" height="26" viewBox="0 0 26 26" aria-hidden="true">
          <circle cx="13" cy="13" r="12" fill="#1b8fd6" />
          <path d="M1.500 10C4 1 14-1 20 3c6 4 6 12 1 14-4 1-6-1-5-3 2-5-7-8-14-4z" fill="#35c8d8" />
          <path d="M17 2c8 3 9 13 4 15-4 1-6-1-5-3 1-4-2-6-4-7z" fill="#5bd66e" />
          <path d="M9 12c-1 7 5 11 13 8-4 5-12 6-16 2z" fill="#0c4f8f" />
          <rect x="1" y="16" width="12" height="9" rx="1" fill="#c9781e" />
          <path d="M1 19.500h12M5 16v-2h4v2" stroke="#6b3c08" fill="none" />
        </svg>
      </TaskButton>
      <TaskButton aria-label="File Explorer">
        <svg width="24" height="22" viewBox="0 0 24 22" aria-hidden="true">
          <path d="M1 1h8l2 3h12v16H1z" fill="#f0a91e" />
          <path d="M1 5h22v15H1z" fill="#ffd868" />
          <path d="M5 20v-7a2 2 0 0 1 2-2h10a2 2 0 0 1 2 2v7h-4v-4H9v4z" fill="#3f97d8" />
        </svg>
      </TaskButton>
      <TaskButton $open aria-label="Outlook">
        <svg width="24" height="24" viewBox="0 0 24 24" aria-hidden="true">
          <path d="M7 1h14v13H7z" fill="#1b8fe0" />
          <path d="M14 1h7v6h-7z" fill="#50c8f5" />
          <path d="M5 10l9 6 10-6v13H5z" fill="#1470c0" />
          <path d="M24 10v13H9z" fill="#35b0ee" />
          <Tile letter="O" color="#0f62b8" />
        </svg>
      </TaskButton>
      <TaskButton $open aria-label="OneNote">
        <svg width="24" height="24" viewBox="0 0 24 24" aria-hidden="true">
          <rect x="6" y="1" width="18" height="22" rx="1" fill="#c767e8" />
          <path d="M20 1h4v7h-4z" fill="#d88cf2" />
          <path d="M20 8h4v7h-4z" fill="#a33cc8" />
          <path d="M20 15h4v8h-4z" fill="#7a1fa0" />
          <Tile letter="N" color="#7719aa" />
        </svg>
      </TaskButton>
      <TaskButton $open aria-label="Webex meeting"><Webex /></TaskButton>
      <TaskButton $open aria-label="Notepad">
        <svg width="24" height="24" viewBox="0 0 24 24" aria-hidden="true">
          <path d="M8 2l14 2-4 17-15-3z" fill="#8ec9cc" />
          <path d="M8 2l14 2-2 8-9 4-7 1z" fill="#cfe9e8" />
          <path d="M22 4l1 14-5 4z" fill="#5c6b6c" />
          <path d="M3 18l15 3 5-3" stroke="#d8d8d8" fill="none" />
        </svg>
      </TaskButton>
      <TaskButton $open aria-label="PowerPoint">
        <svg width="24" height="24" viewBox="0 0 24 24" aria-hidden="true">
          <circle cx="13" cy="12" r="11" fill="#ed6c47" />
          <path d="M13 1a11 11 0 0 1 11 11H13z" fill="#ff8f6b" />
          <path d="M24 12a11 11 0 0 1-21 4l10-4z" fill="#d35230" />
          <Tile letter="P" color="#c43e1c" />
        </svg>
      </TaskButton>
    </Apps>
    <Clock>9:56 AM<br />3/22/2024</Clock>
  </TaskbarBox>
);

/* ------------------------------------------------------------ app */

const PaneGap = styled.div`
  width: 4px;
  flex: none;
`;

export default function App() {
  return (
    <Page>
      <Global />
      <Title />
      <TabBar />
      <Ribbon />
      <Work>
        <ThumbPane aria-label="Slides">
          <ThumbList>
            {THUMBS.map((T, i) => (
              <ThumbItem key={i}>
                <ThumbNumber>{i + 1}</ThumbNumber>
                <ThumbButton $on={i === 4} aria-label={`Slide ${i + 1}`}>
                  <svg width="310" height="175" viewBox="0 0 312 177"><T /></svg>
                </ThumbButton>
              </ThumbItem>
            ))}
          </ThumbList>
          <Scroll $w={15}>
            <ScrollArrow aria-label="Scroll up"><Tri /></ScrollArrow>
            <ScrollThumb $grow={517} />
            <ScrollGap $grow={666} />
            <ScrollArrow aria-label="Scroll down"><Tri down /></ScrollArrow>
          </Scroll>
          <PaneGap />
        </ThumbPane>
        <EditPane>
          <HRulerBar><Ruler reach={6} /></HRulerBar>
          <SlideRow>
            <VRulerBar><Ruler vertical reach={3} /></VRulerBar>
            <Slide />
          </SlideRow>
        </EditPane>
        <Scroll $w={13}>
          <ScrollArrow aria-label="Scroll up"><Tri /></ScrollArrow>
          <ScrollGap $grow={322} />
          <ScrollThumb $grow={80} />
          <ScrollGap $grow={724} />
          <ScrollArrow aria-label="Scroll down"><Tri down /></ScrollArrow>
          <SlideJump>
            <Ico w={9} h={12} vb="0 0 9 12"><path d="M4.500 0L9 5H7l2 4.500V12H0V9.500L2 5H0z" fill="currentColor" stroke="none" /></Ico>
            <Ico w={9} h={12} vb="0 0 9 12"><path d="M4.500 12L9 7H7l2-4.500V0H0v2.500L2 7H0z" fill="currentColor" stroke="none" /></Ico>
          </SlideJump>
        </Scroll>
      </Work>
      <Status />
      <Taskbar />
    </Page>
  );
}
